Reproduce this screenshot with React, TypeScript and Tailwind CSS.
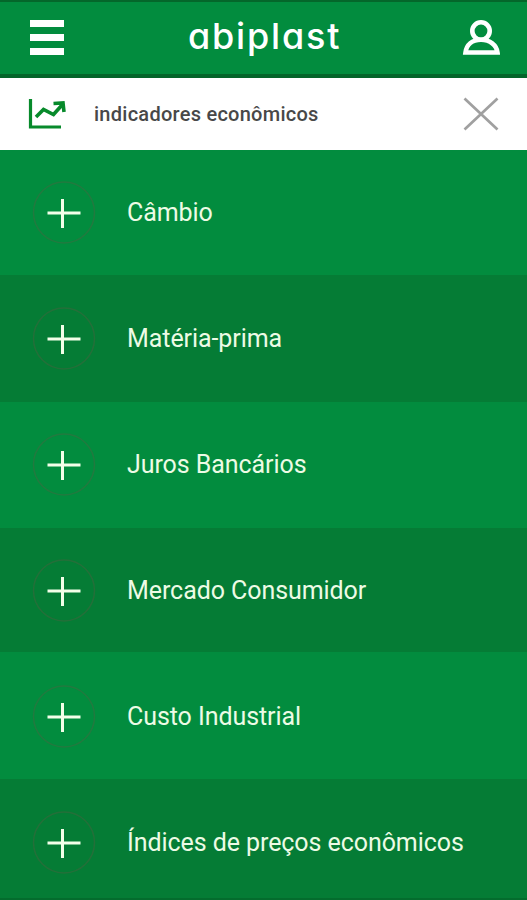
const rows = [
  { label: "Câmbio", tone: "h-[125px] bg-[#028c3e]" },
  { label: "Matéria-prima", tone: "h-[127px] bg-[#057c35]" },
  { label: "Juros Bancários", tone: "h-[126px] bg-[#028c3e]" },
  { label: "Mercado Consumidor", tone: "h-[124px] pt-px bg-[#057c35]" },
  { label: "Custo Industrial", tone: "h-[127px] pt-[2px] bg-[#028c3e]" },
  { label: "Índices de preços econômicos", tone: "h-[126px] pt-px bg-[#057c35]" },
];

function Header() {
  return (
    <header className="flex h-[78px] shrink-0 items-center justify-between border-t-2 border-b-4 border-t-[#04672a] border-b-[#04652a] bg-[#028c3e] pb-px pl-[30px] pr-[27px]">
      <button aria-label="Menu" className="flex w-[34px] flex-col gap-[7px]">
        <span className="h-[7px] w-full bg-white" />
        <span className="h-[7px] w-full bg-white" />
        <span className="h-[7px] w-full bg-white" />
      </button>
      <span className="mb-[3px] ml-[4px] w-[154px] whitespace-nowrap font-['Inter',sans-serif] text-[36px] leading-[48px] font-medium tracking-[1.8px] text-white [font-feature-settings:'cv11']">
        abiplast
      </span>
      <svg className="h-[38px] w-[38px]" viewBox="0 0 38 38" fill="none" stroke="white" strokeWidth="4.600" strokeLinejoin="miter" aria-label="Perfil">
        <circle cx="19" cy="12" r="8.700" />
        <path d="M3.500 33.500C4.500 26 10 20.800 19 20.800S34.500 26 35.500 33.500Z" />
      </svg>
    </header>
  );
}

function TitleBar() {
  return (
    <div className="flex h-[72px] shrink-0 items-center bg-white pl-[28px] pr-[27px]">
      <svg className="h-[32px] w-[38px]" viewBox="0 0 38 32" fill="none" stroke="#078a2b" strokeWidth="3.200">
        <path d="M2.500 1v28H33" />
        <path d="M8 19l7.500-7.500 10 5 9-10" strokeWidth="3.600" />
        <path d="M25.500 5.500l9.500-.5 1 9" strokeWidth="3.600" />
      </svg>
      <h1 className="ml-[28px] flex-1 whitespace-nowrap font-['Roboto',sans-serif] text-[20px] leading-6 font-medium tracking-[0.26px] text-[#484848]">
        indicadores econômicos
      </h1>
      <svg className="h-[34px] w-[37px]" viewBox="0 0 37 34" stroke="#a0a0a0" strokeWidth="2.700" aria-label="Fechar">
        <path d="M1.500 1.500l33 31M34.500 1.500L1.500 32.500" />
      </svg>
    </div>
  );
}

export default function App() {
  return (
    <main className="flex h-[900px] w-[527px] flex-col overflow-hidden bg-[#057c35]">
      <Header />
      <TitleBar />
      <ul className="min-h-0 flex-1 overflow-hidden">
        {rows.map((row) => (
          <li key={row.label} className={`flex items-center pl-[32px] ${row.tone}`}>
            <svg className="h-[64px] w-[64px] shrink-0" viewBox="0 0 64 64" fill="none">
              <circle cx="32" cy="31.500" r="30.500" stroke="#5f5a42" strokeOpacity="0.350" strokeWidth="1.500" />
              <path d="M15.500 32h33M30.500 18v29" stroke="#f3ffe9" strokeWidth="3" />
            </svg>
            <span className="ml-[31px] whitespace-nowrap font-['Roboto',sans-serif] text-[25px] leading-8 tracking-[-0.07px] text-[#edfbe5]">
              {row.label}
            </span>
          </li>
        ))}
      </ul>
      <div className="h-[2px] shrink-0 bg-[#046c2d]" />
    </main>
  );
}
